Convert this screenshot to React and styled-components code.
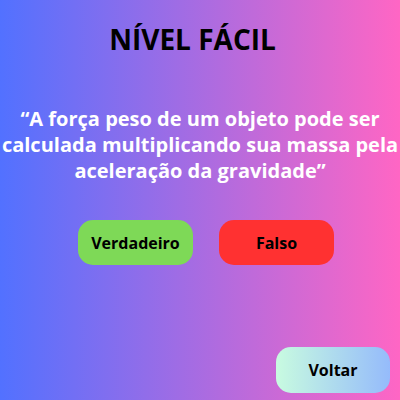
import React from 'react';
import styled, { createGlobalStyle } from 'styled-components';

const GlobalStyle = createGlobalStyle`
    html, body {
        margin:0;
        padding:0;
    }
    body {
        font-family:"Open Sans", "Liberation Sans", sans-serif;
    }
`;

const Page = styled.div`
    width:400px;
    height:400px;
    box-sizing:border-box;
    background:linear-gradient(90deg, #5271ff 0%, #ff66c4 100%);
    display:flex;
    flex-direction:column;
    align-items:center;
    overflow:hidden;
`;

const Title = styled.h1`
    margin:19px 0 0 -15px;
    font-size:28px;
    line-height:40px;
    font-weight:700;
    color:#000;
`;

const Question = styled.p`
    margin:47px 0 0;
    width:400px;
    text-align:center;
    font-size:20px;
    line-height:26px;
    font-weight:700;
    color:#fff;
`;

const AnswerRow = styled.div`
    display:flex;
    gap:26px;
    margin-top:36px;
    margin-left:12px;
`;

const AnswerButton = styled.button`
    width:115px;
    height:45px;
    border:none;
    border-radius:15px;
    background:${props => props.$color};
    font-family:"Open Sans", "Liberation Sans", sans-serif;
    font-size:16px;
    font-weight:700;
    color:#000;
    cursor:pointer;
`;

const Footer = styled.div`
    margin-top:auto;
    align-self:stretch;
    display:flex;
    justify-content:flex-end;
    padding:0 10px 7px 0;
`;

const BackButton = styled.button`
    width:114px;
    height:46px;
    border:none;
    border-radius:15px;
    background:linear-gradient(90deg, #c8fbe0 0%, #95bbfb 100%);
    font-family:"Open Sans", "Liberation Sans", sans-serif;
    font-size:16px;
    font-weight:700;
    color:#000;
    cursor:pointer;
`;

const App = () => {
    return(
        <Page>
            <GlobalStyle />
            <Title>NÍVEL FÁCIL</Title>
            <Question>
                “A força peso de um objeto pode ser calculada multiplicando sua massa pela aceleração da gravidade”
            </Question>
            <AnswerRow>
                <AnswerButton $color="#7ed957">Verdadeiro</AnswerButton>
                <AnswerButton $color="#ff3131">Falso</AnswerButton>
            </AnswerRow>
            <Footer>
                <BackButton>Voltar</BackButton>
            </Footer>
        </Page>
    );
}

export default App;
